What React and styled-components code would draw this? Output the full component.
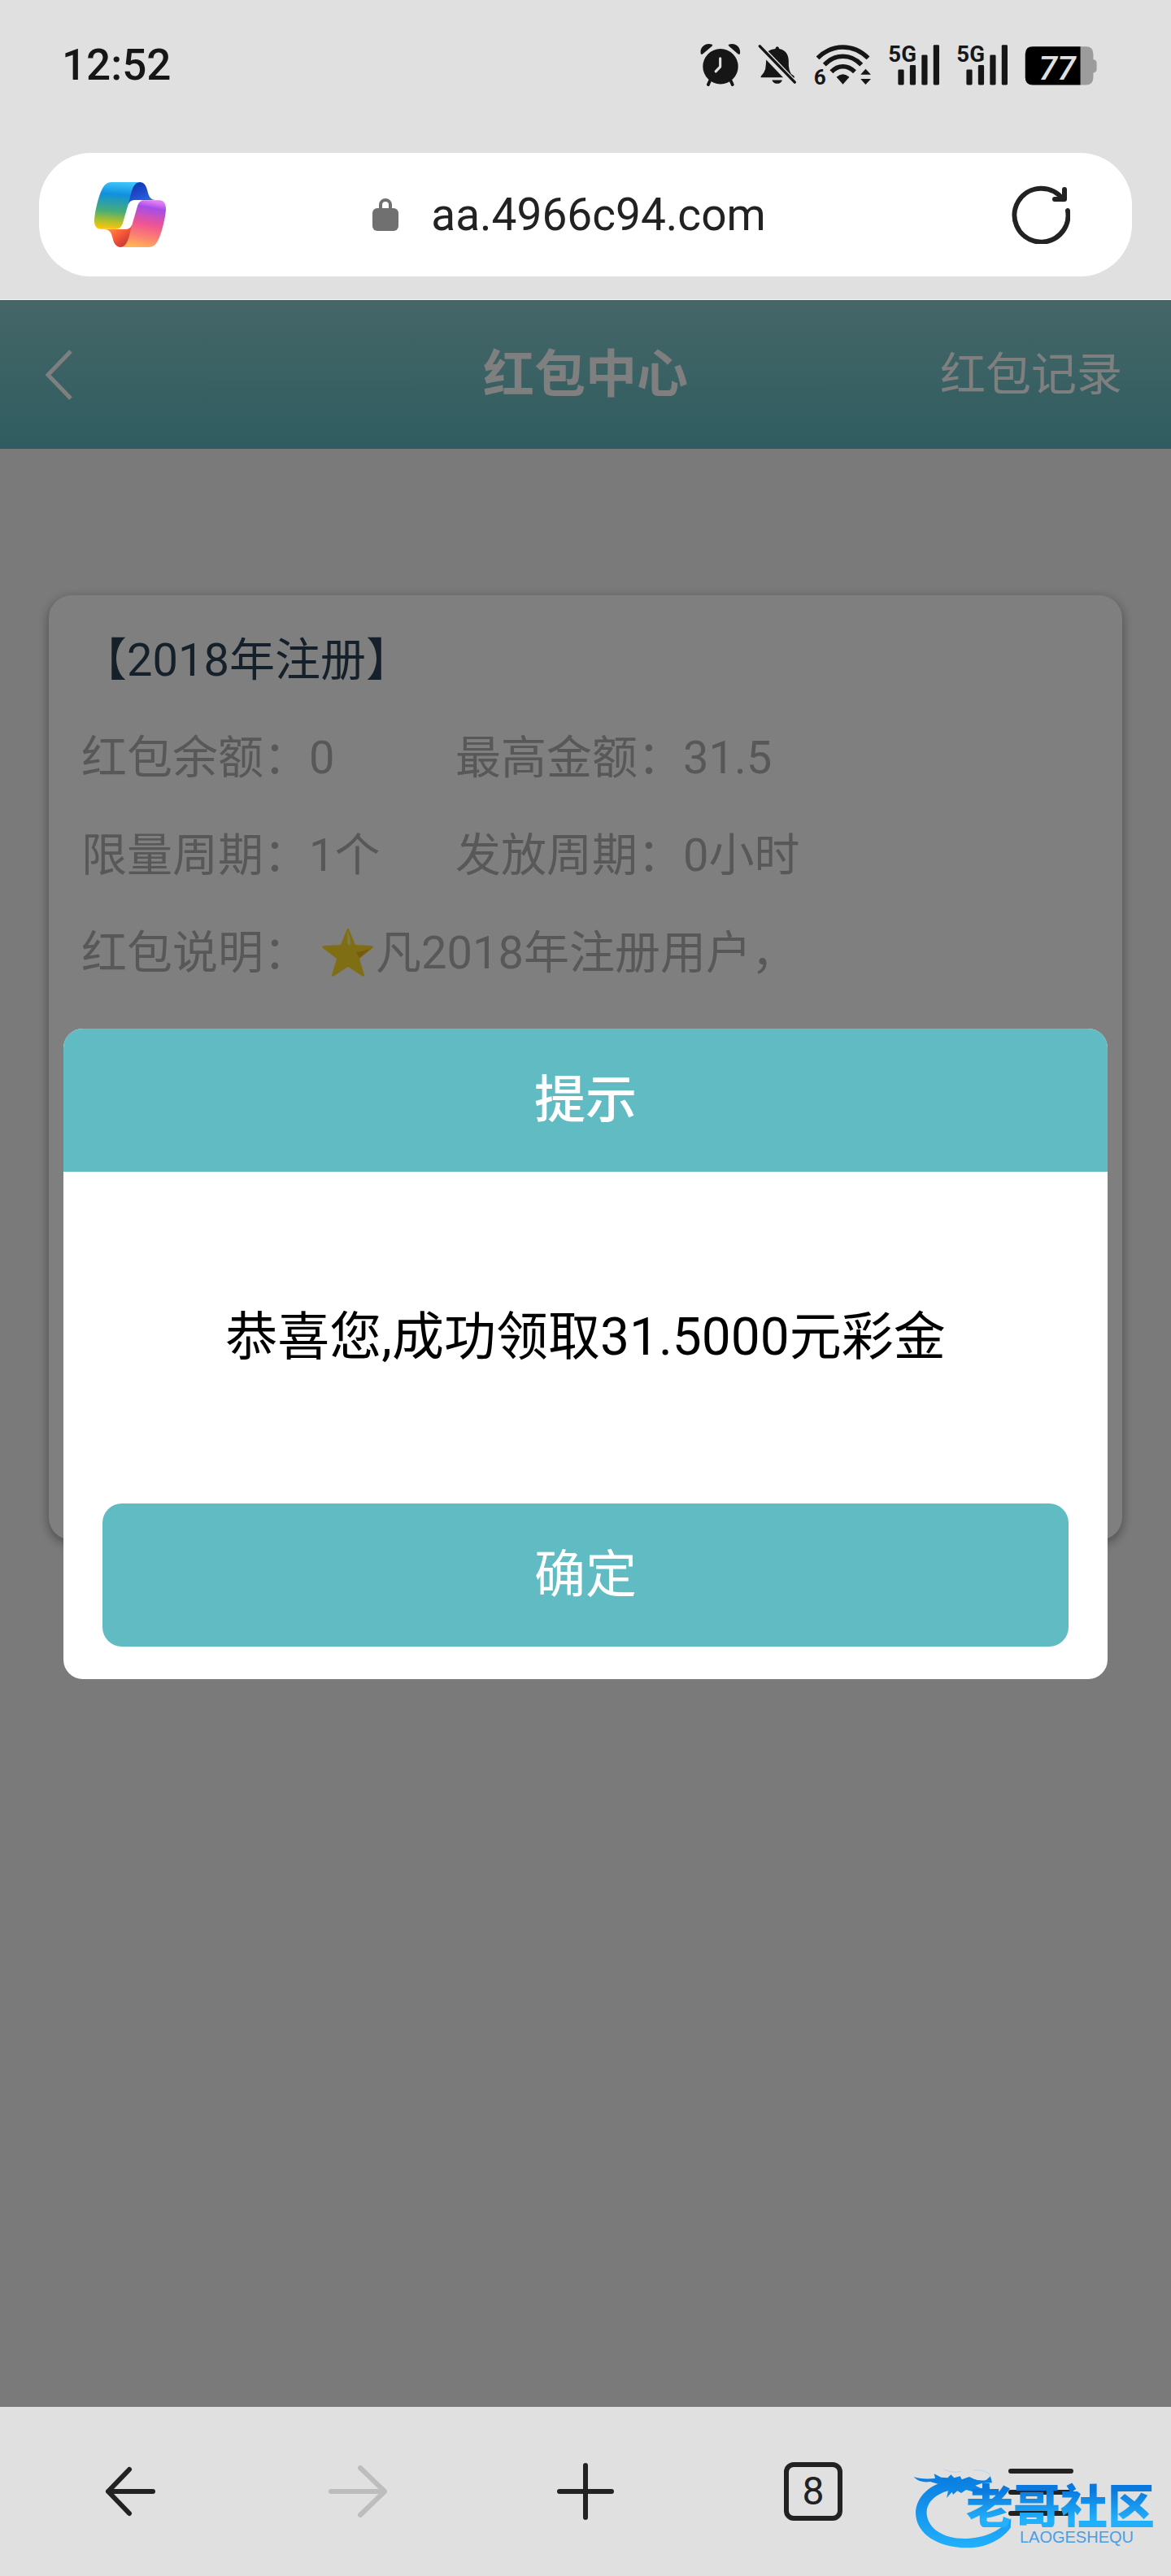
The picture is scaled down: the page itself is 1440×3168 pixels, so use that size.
import React from "react";
import styled, { createGlobalStyle } from "styled-components";

const INK = "#222222";
const TEAL = "#60bbc3";

const GlobalStyle = createGlobalStyle`
  * { box-sizing: border-box; }
  body {
    margin: 0;
    font-family: Roboto, "Noto Sans CJK SC", sans-serif;
    background: #e0e0e0;
  }
  h1, h2, p, dl, dt, dd { margin: 0; font-weight: 400; }
  svg { display: block; flex: none; }
  button {
    padding: 0;
    border: 0;
    background: none;
    font-family: inherit;
    cursor: pointer;
  }
`;

const Screen = styled.div`
  position: relative;
  display: flex;
  flex-direction: column;
  min-height: 100vh;
  background: #e0e0e0;
`;

/* status bar */

const StatusBar = styled.header`
  display: flex;
  align-items: center;
  justify-content: space-between;
  height: 160px;
  padding: 0 91px 0 76px;
  color: #161616;
`;

const Clock = styled.time`
  font-size: 53px;
  line-height: 64px;
  font-weight: 500;
`;

const StatusIcons = styled.div`
  display: flex;
  align-items: center;
  gap: 21px;
`;

/* address bar */

const AddressBar = styled.div`
  display: flex;
  align-items: center;
  height: 152px;
  margin: 28px 48px;
  padding: 0 76px 0 68px;
  border-radius: 64px;
  background: #ffffff;
`;

const IconButton = styled.button`
  display: flex;
  align-items: center;
  justify-content: center;
  color: ${(p) => (p.$dim ? "#bdbdbd" : INK)};
`;

const Address = styled.button`
  display: flex;
  flex: 1;
  align-items: center;
  justify-content: center;
  gap: 40px;
  padding-right: 48px;
  color: ${INK};
  font-size: 55px;
  line-height: 64px;
`;

/* web page */

const Viewport = styled.main`
  position: relative;
  flex: 1;
  border-top: 1px solid #eef6f6;
  background: #f5f5f5;
`;

const PageHeader = styled.div`
  display: grid;
  grid-template-columns: 1fr auto 1fr;
  align-items: center;
  height: 183px;
  padding: 0 56px;
  background: linear-gradient(#8acdd0, #60b9c0);
  color: #ffffff;
`;

const BackLink = styled.a`
  justify-self: start;
  color: inherit;
`;

const PageTitle = styled.h1`
  font-size: 63px;
  line-height: 80px;
  font-weight: 700;
`;

const RecordLink = styled.a`
  justify-self: end;
  padding-right: 4px;
  color: inherit;
  font-size: 56px;
  line-height: 80px;
  text-decoration: none;
`;

const Card = styled.section`
  min-height: 1162px;
  margin: 180px 60px 0;
  padding: 20px 40px;
  border-radius: 28px;
  background: #ffffff;
  box-shadow: 0 4px 14px rgba(0, 0, 0, 0.4);
  color: #b0b0b0;
  font-size: 56px;
  line-height: 120px;
`;

const CardTitle = styled.h2`
  color: #2c4054;
  font-size: 56px;
`;

const Facts = styled.dl`
  display: grid;
  grid-template-columns: 460px 1fr;
`;

const Fact = styled.div`
  display: flex;
  align-items: center;
  grid-column: ${(p) => (p.$wide ? "1 / -1" : "auto")};
`;

const FactText = styled.dd`
  display: flex;
  align-items: center;
  padding-left: ${(p) => (p.$indent ? 14 : 0)}px;
`;

/* dialog */

const Overlay = styled.div`
  position: absolute;
  inset: 0;
  display: flex;
  align-items: center;
  padding: 0 78px;
  background: rgba(0, 0, 0, 0.5);
`;

const Dialog = styled.div`
  flex: 1;
  overflow: hidden;
  border-radius: 24px;
  background: #ffffff;
  text-align: center;
`;

const DialogTitle = styled.h2`
  background: ${TEAL};
  color: #ffffff;
  font-size: 63px;
  line-height: 176px;
  font-weight: 500;
`;

const DialogText = styled.p`
  padding: 144px 48px;
  color: #000000;
  font-size: 64px;
  line-height: 120px;
`;

const DialogFooter = styled.div`
  padding: 0 48px 40px;
`;

const ConfirmButton = styled.button`
  display: block;
  width: 100%;
  border-radius: 24px;
  background: ${TEAL};
  color: #ffffff;
  font-size: 63px;
  line-height: 176px;
`;

/* browser toolbar */

const Toolbar = styled.nav`
  display: grid;
  grid-template-columns: repeat(5, 1fr);
  height: 208px;
  padding: 0 20px;
`;

const TabCount = styled.span`
  display: flex;
  align-items: center;
  justify-content: center;
  width: 72px;
  height: 72px;
  border: 6px solid ${INK};
  border-radius: 12px;
  font-size: 48px;
  line-height: 56px;
`;

/* watermark */

const Watermark = styled.div`
  position: absolute;
  right: 20px;
  bottom: 32px;
  display: flex;
  pointer-events: none;
`;

const WatermarkText = styled.div`
  display: flex;
  flex-direction: column;
  align-items: flex-end;
  justify-content: flex-end;
  margin-left: -64px;
  padding-bottom: 4px;
`;

const WatermarkName = styled.strong`
  background: linear-gradient(#0a78dc 20%, #22b0fb 85%);
  background-clip: text;
  color: transparent;
  font-family: "Noto Sans CJK SC", sans-serif;
  font-size: 58px;
  line-height: 58px;
  font-weight: 900;
`;

const WatermarkLatin = styled.small`
  padding-right: 26px;
  color: #4a9ee4;
  font-family: "Liberation Sans", sans-serif;
  font-size: 20px;
  line-height: 24px;
`;

const AlarmIcon = () => (
  <svg width="50" height="62" viewBox="66 60 144 180" fill="currentColor" aria-label="闹钟">
    <circle cx="138" cy="155" r="63" />
    <path d="M68 111C62 88 84 68 108 77Q112 79 107 83L75 110Q70 113 68 111ZM207 111C213 88 191 68 168 77Q164 79 169 83L200 110Q205 113 207 111Z" />
    <path d="M102 202L94 220M173 202L181 220" stroke="currentColor" strokeWidth="11" strokeLinecap="round" />
    <path d="M137 126V156L121 173" fill="none" stroke="#e0e0e0" strokeWidth="9" strokeLinecap="round" strokeLinejoin="round" />
  </svg>
);

const MuteIcon = () => (
  <svg width="47" height="62" viewBox="267 60 138 180" fill="currentColor" aria-label="静音">
    <path d="M304 100Q314 93 330 91Q331 83 337 83Q343 83 344 91C368 95 378 114 378 136V152Q379 170 387 182L398 190V198Z" />
    <path d="M297 131L358 195H280Q275 195 279 189L288 178Q296 165 296 146ZM318 204H355Q350 217 337 217Q323 217 318 204Z" />
    <path d="M274 82L400 212" stroke="currentColor" strokeWidth="10" strokeLinecap="round" />
  </svg>
);

const WifiIcon = () => (
  <svg width="71" height="62" viewBox="463 60 206 180" fill="none" stroke="currentColor" strokeWidth="16" aria-label="无线网络">
    <path d="M479 125Q518 86 569 86Q620 86 659 125M503 149Q532 119 569 119Q606 119 635 149M528 174Q546 155 569 155Q592 155 611 174" />
    <path d="M546 193Q569 172 592 193L569 219ZM632 184L650 164L669 184ZM632 199H669L650 220Z" fill="currentColor" stroke="none" />
    <text x="465" y="220" fill="currentColor" stroke="none" fontFamily="Roboto, sans-serif" fontSize="76" fontWeight="700">6</text>
  </svg>
);

const SignalIcon = () => (
  <svg width="63" height="62" viewBox="726 60 183 180" fill="currentColor" aria-label="5G 信号">
    <rect x="762" y="166" width="21" height="55" rx="4" />
    <rect x="804" y="150" width="21" height="71" rx="4" />
    <rect x="846" y="114" width="21" height="107" rx="4" />
    <rect x="888" y="78" width="21" height="143" rx="4" />
    <text x="727" y="137" fontFamily="Roboto, sans-serif" fontSize="80" fontWeight="700">5G</text>
  </svg>
);

const BatteryIcon = () => (
  <svg width="89" height="62" viewBox="1218 60 258 180" aria-label="电量">
    <path d="M1416 84H1436Q1463 84 1463 111V130Q1475 133 1475 142V167Q1475 175 1463 178V194Q1463 221 1436 221H1416Z" fill="#9c9c9c" />
    <path d="M1417 84V221H1247Q1220 221 1220 194V111Q1220 84 1247 84Z" fill="#000000" />
    <text x="1268" y="201" fill="#e0e0e0" fontFamily="Roboto, sans-serif" fontSize="120" fontWeight="500" fontStyle="italic">77</text>
  </svg>
);

const RIBBON =
  "M292 132H395C378 134 370 150 364 172L355 207L334 280C328 300 320 305 308 305H252C236 305 227 292 228 270C230 240 242 192 252 168C262 144 272 132 292 132Z";
const FOLD =
  "M395 132C412 132 420 146 424 164C429 186 436 197 454 198H380C366 198 358 202 353 216L350 180Q356 132 395 132Z";

const AssistantLogo = () => (
  <svg width="88" height="80" viewBox="228 132 264 240" aria-hidden="true">
    <defs>
      <linearGradient id="cool" x1="0.5" y1="0" x2="0.42" y2="1">
        <stop offset="0" stopColor="#3cc4fa" />
        <stop offset="0.26" stopColor="#1090dd" />
        <stop offset="0.62" stopColor="#48ac78" />
        <stop offset="0.82" stopColor="#a8bf30" />
        <stop offset="1" stopColor="#fcc60e" />
      </linearGradient>
      <linearGradient id="warm" x1="0.42" y1="1" x2="0.6" y2="0">
        <stop offset="0" stopColor="#e07df2" />
        <stop offset="0.14" stopColor="#a64de8" />
        <stop offset="0.5" stopColor="#f05590" />
        <stop offset="0.78" stopColor="#fb8470" />
        <stop offset="1" stopColor="#ffb457" />
      </linearGradient>
      <linearGradient id="deep" x1="0.3" y1="0" x2="0.9" y2="1">
        <stop offset="0" stopColor="#0c38b4" />
        <stop offset="0.5" stopColor="#2450d0" />
        <stop offset="1" stopColor="#1389ee" />
      </linearGradient>
      <linearGradient id="ember" x1="0.2" y1="0.2" x2="0.9" y2="0.9">
        <stop offset="0" stopColor="#cf3a38" />
        <stop offset="0.5" stopColor="#fb6038" />
        <stop offset="1" stopColor="#ff9a3c" />
      </linearGradient>
    </defs>
    <path d={FOLD} fill="url(#deep)" />
    <path d={RIBBON} fill="url(#cool)" />
    <g transform="rotate(180 360 252)">
      <path d={FOLD} fill="url(#ember)" />
      <path d={RIBBON} fill="url(#warm)" />
    </g>
  </svg>
);

const LockIcon = () => (
  <svg width="32" height="40" viewBox="0 0 32 40" aria-hidden="true">
    <rect y="12" width="32" height="28" rx="6" fill="#707070" />
    <path d="M10 14V8A6 6 0 0 1 22 8V14" fill="none" stroke="#707070" strokeWidth="4" />
  </svg>
);

const Stroke = ({ size, d }) => (
  <svg
    width={size}
    height={size}
    viewBox={`0 0 ${size} ${size}`}
    fill="none"
    stroke="currentColor"
    strokeWidth="6"
    strokeLinecap="round"
    strokeLinejoin="round"
    aria-hidden="true"
  >
    <path d={d} />
  </svg>
);

const StarIcon = () => (
  <svg width="68" height="68" viewBox="0 0 68 68" role="img" aria-label="星">
    <path d="M33 4Q34 3 35 5L43 24L63 25Q66 26 64 28L48 41L54 61Q54 64 51 62L34 51L17 62Q14 64 14 61L20 41L3 28Q1 25 5 25L25 24Z" fill="#ffdc28" />
    <path d="M33 7Q37 14 37 24Q34 26 33 20Z" fill="#fff59a" />
    <path d="M62 28L48 40L44 33Q54 32 62 28Z" fill="#f0b41c" />
  </svg>
);

const Dragon = () => (
  <svg width="130" height="100" viewBox="120 290 390 300" aria-hidden="true">
    <defs>
      <linearGradient id="dragon" x1="0" y1="0" x2="0" y2="1">
        <stop offset="0.1" stopColor="#0a80e2" />
        <stop offset="1" stopColor="#22b0fb" />
      </linearGradient>
    </defs>
    <path
      fill="url(#dragon)"
      d="M125 320Q150 330 204 326L200 309L226 322L250 324L262 312L274 324L296 318L302 330L330 320Q362 338 392 332L408 318L414 342L376 344L352 352L372 362L406 360L402 378L380 372L340 374L318 368L300 380L286 372L270 386L266 376L246 398L252 372L236 376C190 396 170 424 173 458C178 512 236 548 310 548C384 548 440 520 468 488L484 474L482 508C450 552 392 582 322 582C214 582 132 530 132 452C134 404 166 366 214 346L186 338Q146 344 125 320Z"
    />
    <path
      fill="none"
      stroke="#b9d4ec"
      strokeWidth="3"
      d="M236 292Q262 308 300 300M346 296Q392 292 410 316"
    />
  </svg>
);

const facts = [
  { label: "红包余额：", value: "0" },
  { label: "最高金额：", value: "31.5" },
  { label: "限量周期：", value: "1个" },
  { label: "发放周期：", value: "0小时" },
];

export default function App() {
  return (
    <Screen>
      <GlobalStyle />
      <StatusBar>
        <Clock>12:52</Clock>
        <StatusIcons>
          <AlarmIcon />
          <MuteIcon />
          <WifiIcon />
          <SignalIcon />
          <SignalIcon />
          <BatteryIcon />
        </StatusIcons>
      </StatusBar>

      <AddressBar>
        <IconButton aria-label="助手">
          <AssistantLogo />
        </IconButton>
        <Address>
          <LockIcon />
          <span>aa.4966c94.com</span>
        </Address>
        <IconButton aria-label="刷新">
          <Stroke size={72} d="M69 31A33 33 0 1 1 63 17M65 5V17H53" />
        </IconButton>
      </AddressBar>

      <Viewport>
        <PageHeader>
          <BackLink href="#back" aria-label="返回">
            <svg width="34" height="62" viewBox="0 0 34 62" fill="none" stroke="currentColor" strokeWidth="5">
              <path d="M31 2L3 31L31 60" />
            </svg>
          </BackLink>
          <PageTitle>红包中心</PageTitle>
          <RecordLink href="#records">红包记录</RecordLink>
        </PageHeader>

        <Card>
          <CardTitle>【2018年注册】</CardTitle>
          <Facts>
            {facts.map((fact) => (
              <Fact key={fact.label}>
                <dt>{fact.label}</dt>
                <FactText>{fact.value}</FactText>
              </Fact>
            ))}
            <Fact $wide>
              <dt>红包说明：</dt>
              <FactText $indent>
                <StarIcon />
                凡2018年注册用户，
              </FactText>
            </Fact>
          </Facts>
        </Card>

        <Overlay>
          <Dialog role="dialog" aria-modal="true" aria-labelledby="dialog-title">
            <DialogTitle id="dialog-title">提示</DialogTitle>
            <DialogText>恭喜您,成功领取31.5000元彩金</DialogText>
            <DialogFooter>
              <ConfirmButton>确定</ConfirmButton>
            </DialogFooter>
          </Dialog>
        </Overlay>
      </Viewport>

      <Toolbar>
        <IconButton aria-label="后退">
          <Stroke size={62} d="M59 31H4M30 4L4 31L30 58" />
        </IconButton>
        <IconButton aria-label="前进" $dim>
          <Stroke size={72} d="M3 36H69M39 7L69 36L39 65" />
        </IconButton>
        <IconButton aria-label="新建标签页">
          <Stroke size={72} d="M4 36H68M36 4V68" />
        </IconButton>
        <IconButton aria-label="标签页">
          <TabCount>8</TabCount>
        </IconButton>
        <IconButton aria-label="菜单">
          <Stroke size={80} d="M3 15H77M3 41H77M3 67H77" />
        </IconButton>
      </Toolbar>

      <Watermark>
        <Dragon />
        <WatermarkText>
          <WatermarkName>老哥社区</WatermarkName>
          <WatermarkLatin>LAOGESHEQU</WatermarkLatin>
        </WatermarkText>
      </Watermark>
    </Screen>
  );
}
